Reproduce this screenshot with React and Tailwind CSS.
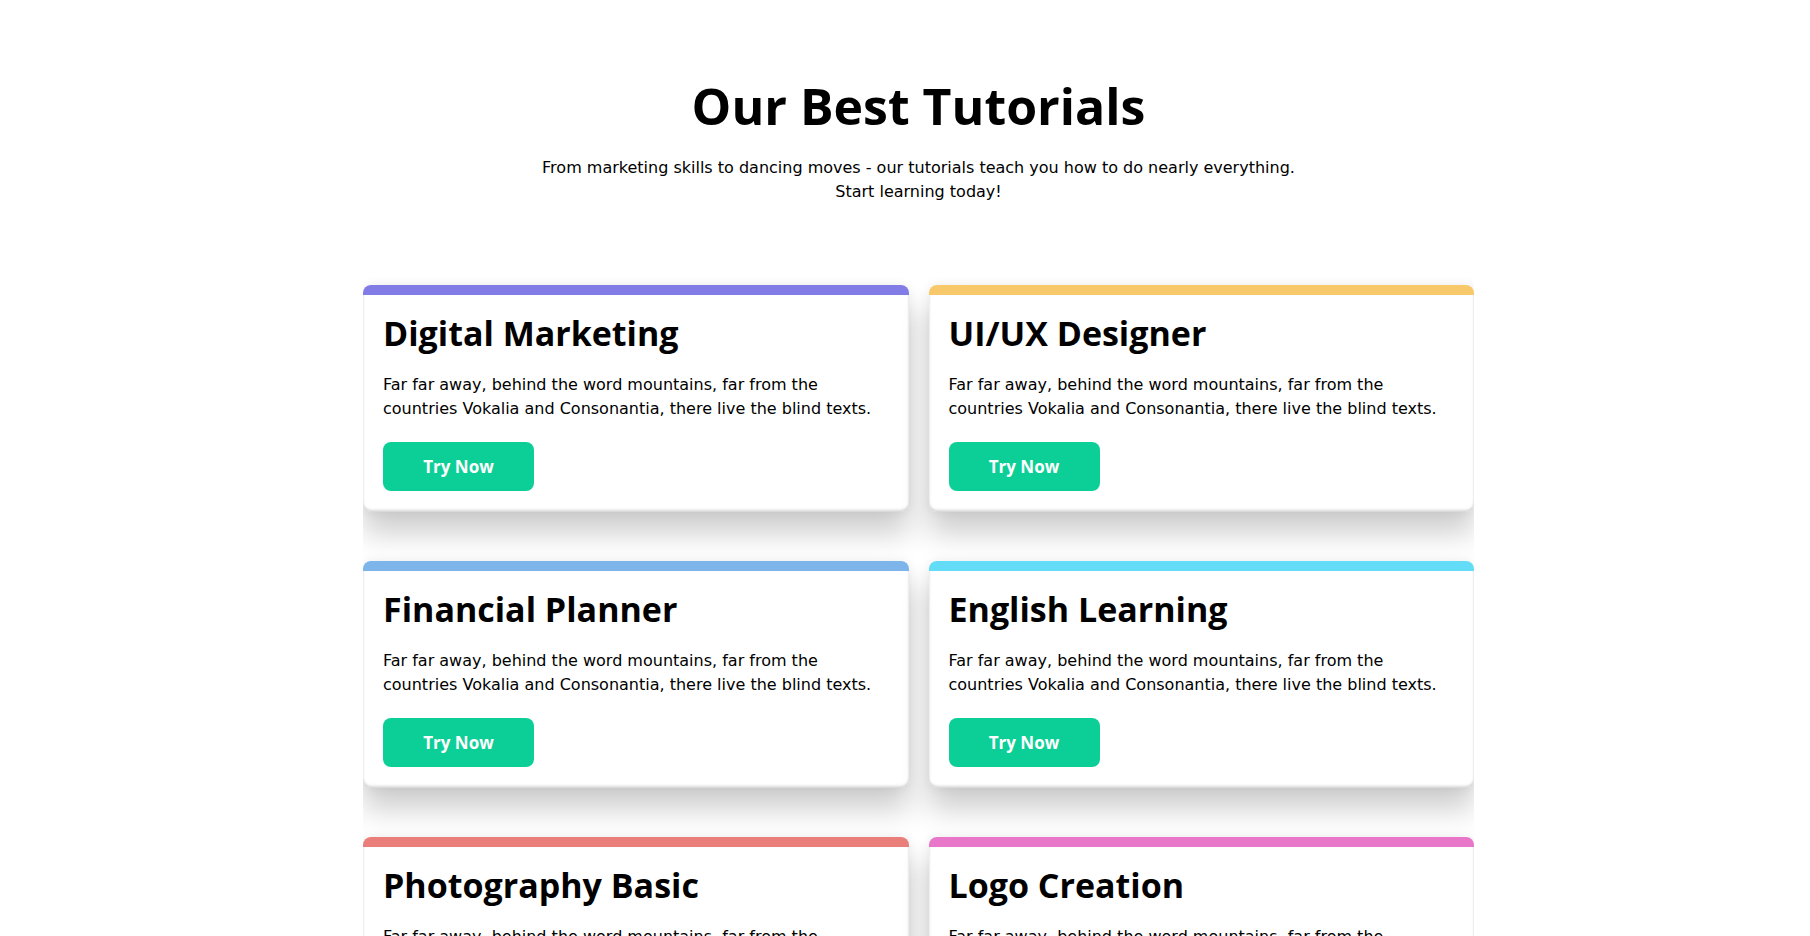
import React from 'react';

const tutorials = [
  { title: 'Digital Marketing', bar: 'bg-[#827de6]' },
  { title: 'UI/UX Designer', bar: 'bg-[#f8c96a]' },
  { title: 'Financial Planner', bar: 'bg-[#7db4ea]' },
  { title: 'English Learning', bar: 'bg-[#62dcf7]' },
  { title: 'Photography Basic', bar: 'bg-[#ea7e7b]' },
  { title: 'Logo Creation', bar: 'bg-[#e876c9]' },
];

const headFont = "font-['Open_Sans',sans-serif]";
const bodyFont = "font-['DejaVu_Sans',sans-serif]";

const TutorialCard = ({ title, bar }) => (
  <div className="rounded-lg bg-white overflow-hidden shadow-[0_22px_28px_rgba(0,0,0,0.19),0_0_12px_rgba(0,0,0,0.07)]">
    <div className={`h-[10px] ${bar}`}></div>
    <div className="px-5 pt-[18px] pb-[21px] rounded-b-lg shadow-[inset_0_-3px_3px_-1px_rgba(0,0,0,0.16),inset_2px_0_3px_-2px_rgba(0,0,0,0.12),inset_-2px_0_3px_-2px_rgba(0,0,0,0.12)]">
      <h3 className={`${headFont} text-[34px] leading-[41px] font-bold text-black`}>{title}</h3>
      <p className={`${bodyFont} mt-[19px] text-base leading-6 text-black`}>
        Far far away, behind the word mountains, far from the countries Vokalia and Consonantia, there live the blind texts.
      </p>
      <button className={`${headFont} mt-[21px] h-[49px] w-[151px] rounded-lg bg-[#0ccf97] text-[17px] font-bold text-white`}>
        Try Now
      </button>
    </div>
  </div>
);

export default function App() {
  return (
    <div className="min-h-screen bg-white pb-20">
      <div className="flex justify-center pl-[27px]">
        <div className="w-[1111px]">
          {/* Heading */}
          <div className="pt-[76px] text-center">
            <h1 className={`${headFont} text-[50px] leading-[60px] font-bold text-black`}>Our Best Tutorials</h1>
            <p className={`${bodyFont} mt-[20px] text-base leading-6 text-black`}>
              From marketing skills to dancing moves - our tutorials teach you how to do nearly everything.
              <br />
              Start learning today!
            </p>
          </div>

          {/* Cards */}
          <div className="mt-[65px] overflow-hidden pt-[16px] pb-10">
            <div className="grid grid-cols-2 gap-x-5 gap-y-[49px]">
              {tutorials.map((t) => (
                <TutorialCard key={t.title} {...t} />
              ))}
            </div>
          </div>
        </div>
      </div>
    </div>
  );
}
